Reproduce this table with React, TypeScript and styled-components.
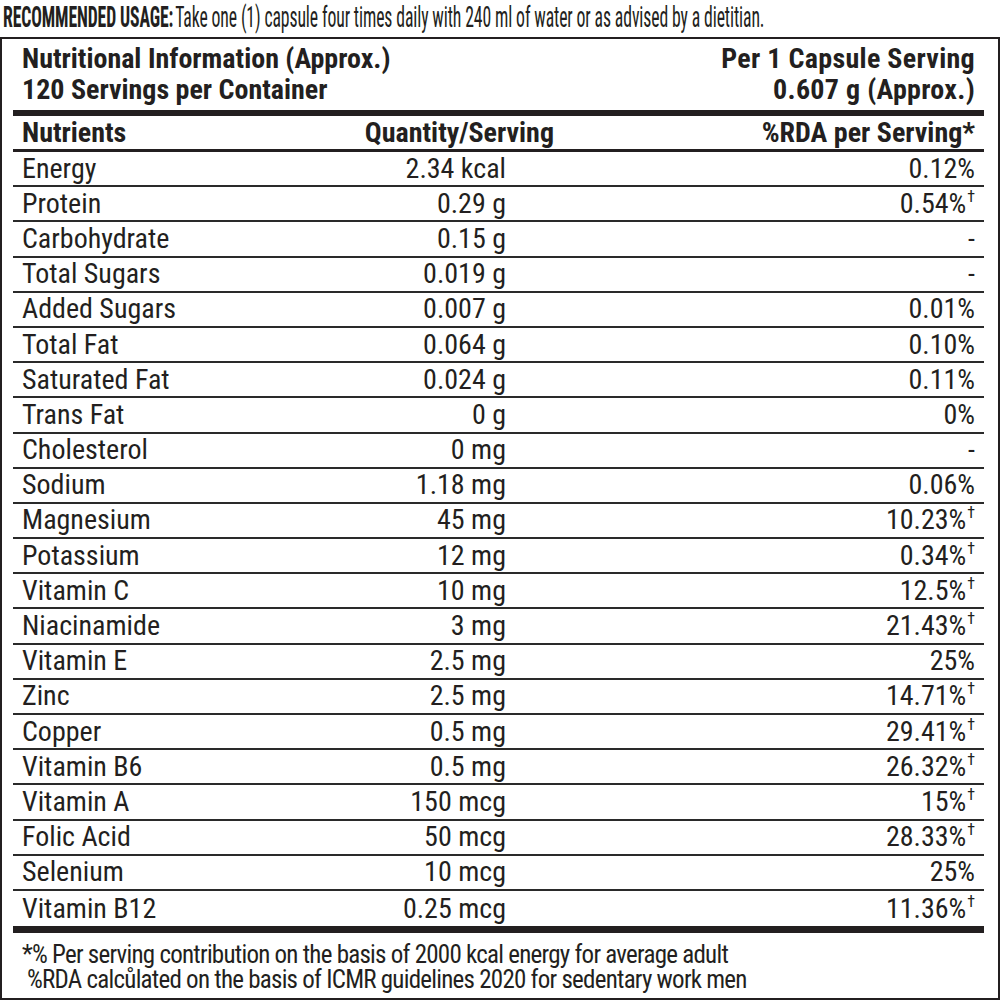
import React from "react";
import styled, { createGlobalStyle } from "styled-components";

const GlobalStyle = createGlobalStyle`
  html, body { margin: 0; padding: 0; background: #fff; overflow: hidden; }
  body { font-family: "Roboto Condensed", "Liberation Sans", sans-serif; color: #231f20; }
`;

const Page = styled.div`
  width: 1000px;
  height: 1000px;
  display: flex;
  flex-direction: column;
`;

const UsageBar = styled.div`
  height: 37px;
  white-space: nowrap;
`;

const UsageText = styled.div`
  font-size: 17.7px;
  line-height: normal;
  padding-left: 3px;
  transform: scaleY(1.7);
  transform-origin: left top;
  letter-spacing: -0.11px;
`;

const UsageLabel = styled.span`
  font-weight: 700;
  margin-right: 2px;
`;

const Panel = styled.section`
  flex: 1;
  border: 2px solid #231f20;
  padding: 0 14px 0 11px;
  display: flex;
  flex-direction: column;
`;

const TitleBlock = styled.div`
  display: flex;
  justify-content: space-between;
  padding: 4px 9px 0 9px;
  height: 71px;
  box-sizing: border-box;
  font-weight: 700;
  font-size: 28px;
  line-height: 31px;
`;

const TitleCol = styled.div<{ $right?: boolean }>`
  text-align: ${(p) => (p.$right ? "right" : "left")};
  letter-spacing: ${(p) => (p.$right ? "0.3px" : "0")};
`;

const Bar = styled.div<{ $h: number }>`
  height: ${(p) => p.$h}px;
  background: #231f20;
`;

const Row = styled.div<{ $head?: boolean; $last?: boolean }>`
  display: grid;
  grid-template-columns: 328px 156px 1fr;
  align-items: center;
  padding: 0 9px;
  box-sizing: border-box;
  height: ${(p) => (p.$head ? 36 : 35.2)}px;
  border-bottom: ${(p) => (p.$last ? "none" : p.$head ? "3px solid #231f20" : "2px solid #2a2a2a")};
  font-size: 28px;
  font-weight: ${(p) => (p.$head ? 700 : 400)};
  line-height: 1;
  white-space: nowrap;
`;

const Cell = styled.div<{ $align?: "left" | "right"; $shift?: number }>`
  text-align: ${(p) => p.$align || "left"};
  margin-right: ${(p) => (p.$shift ? -p.$shift : 0)}px;
`;

const Dagger = styled.sup`
  font-size: 16px;
  vertical-align: 11px;
  line-height: 0;
  margin-left: 1px;
`;

const Footer = styled.div`
  padding: 9px 9px 0 9px;
  font-size: 25px;
  line-height: 25px;
  white-space: pre;
  letter-spacing: -0.75px;
`;

type Item = [string, string, string, boolean?];

const items: Item[] = [
  ["Energy", "2.34 kcal", "0.12%"],
  ["Protein", "0.29 g", "0.54%", true],
  ["Carbohydrate", "0.15 g", "-"],
  ["Total Sugars", "0.019 g", "-"],
  ["Added Sugars", "0.007 g", "0.01%"],
  ["Total Fat", "0.064 g", "0.10%"],
  ["Saturated Fat", "0.024 g", "0.11%"],
  ["Trans Fat", "0 g", "0%"],
  ["Cholesterol", "0 mg", "-"],
  ["Sodium", "1.18 mg", "0.06%"],
  ["Magnesium", "45 mg", "10.23%", true],
  ["Potassium", "12 mg", "0.34%", true],
  ["Vitamin C", "10 mg", "12.5%", true],
  ["Niacinamide", "3 mg", "21.43%", true],
  ["Vitamin E", "2.5 mg", "25%"],
  ["Zinc", "2.5 mg", "14.71%", true],
  ["Copper", "0.5 mg", "29.41%", true],
  ["Vitamin B6", "0.5 mg", "26.32%", true],
  ["Vitamin A", "150 mcg", "15%", true],
  ["Folic Acid", "50 mcg", "28.33%", true],
  ["Selenium", "10 mcg", "25%"],
  ["Vitamin B12", "0.25 mcg", "11.36%", true],
];

export default function App() {
  return (
    <>
      <GlobalStyle />
      <Page>
        <UsageBar>
          <UsageText>
            <UsageLabel>RECOMMENDED USAGE:</UsageLabel>
            Take one (1) capsule four times daily with 240 ml of water or as advised by a dietitian.
          </UsageText>
        </UsageBar>
        <Panel>
          <TitleBlock>
            <TitleCol>
              Nutritional Information (Approx.)
              <br />
              120 Servings per Container
            </TitleCol>
            <TitleCol $right>
              Per 1 Capsule Serving
              <br />
              0.607 g (Approx.)
            </TitleCol>
          </TitleBlock>
          <Bar $h={6} />
          <Row $head>
            <Cell>Nutrients</Cell>
            <Cell $align="right" $shift={48}>Quantity/Serving</Cell>
            <Cell $align="right">%RDA per Serving*</Cell>
          </Row>
          {items.map(([name, qty, rda, dag], i) => (
            <Row key={name} $last={i === items.length - 1}>
              <Cell>{name}</Cell>
              <Cell $align="right">{qty}</Cell>
              <Cell $align="right">
                {rda}
                {dag && <Dagger>†</Dagger>}
              </Cell>
            </Row>
          ))}
          <Bar $h={7} />
          <Footer>
            {"*% Per serving contribution on the basis of 2000 kcal energy for average adult\n %RDA calcůlated on the basis of ICMR guidelines 2020 for sedentary work men"}
          </Footer>
        </Panel>
      </Page>
    </>
  );
}
